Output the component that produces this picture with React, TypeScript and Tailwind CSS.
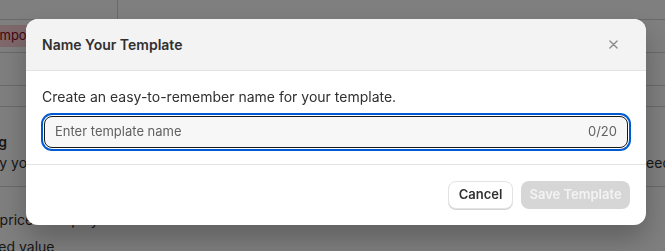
import React, { useState } from 'react';

const line = 'border-b border-[#d4d4d4]';

const PageBehind: React.FC = () => (
    <div className="h-[251px] w-[665px] overflow-hidden bg-white text-[14px] text-[#303030]">
        <div className={`flex h-[20px] ${line}`}>
            <div className="w-[118px] border-r border-[#d4d4d4]" />
        </div>
        <div className={`flex h-[33px] items-center ${line}`}>
            <span className="-ml-[12px] rounded-md bg-[#fed1d7] px-2 py-[1px] text-[13px] text-[#8e0b21]">Important</span>
        </div>
        <div className={`h-[33px] ${line}`} />
        <div className={`h-[21px] ${line}`} />
        <div className={`pt-[24px] pb-[13px] ${line}`}>
            <div className="flex w-[7px] justify-end whitespace-nowrap font-semibold">Pricing</div>
            <div className="flex justify-between whitespace-nowrap">
                <span className="-ml-[9px]">by your customers, so they never exceed</span>
                <span className="-mr-[6px]">exceed</span>
            </div>
        </div>
        <div className="pt-[22px] whitespace-nowrap">
            <div className="-ml-[31px]">Unit price is displayed</div>
            <div className="-ml-[50px] mt-[6px]">Estimated value</div>
        </div>
    </div>
);

export default function App() {
    const [name, setName] = useState('');

    return (
        <div className="relative font-['Inter',sans-serif]">
            <PageBehind />
            <div className="fixed inset-0 flex items-start bg-black/50 pl-[26px] pt-[19px]">
                <div className="w-[620px] overflow-hidden rounded-xl bg-white shadow-[0_14px_28px_rgba(0,0,0,0.25)]">
                    <div className="flex h-[52px] items-center justify-between border-b border-[#e3e3e3] bg-[#f3f3f3] px-4">
                        <h2 className="text-[14px] font-semibold text-[#303030]">Name Your Template</h2>
                        <button className="mr-[3px] flex h-7 w-7 items-center justify-center text-[#8a8a8a]">
                            <svg width="9" height="9" viewBox="0 0 10 10" fill="none" stroke="currentColor" strokeWidth="1.5" strokeLinecap="round">
                                <path d="M1 1l8 8M9 1l-8 8" />
                            </svg>
                        </button>
                    </div>
                    <div className="px-4 pt-4 pb-4">
                        <p className="text-[14px] leading-5 text-[#303030]">Create an easy-to-remember name for your template.</p>
                        <div className="mt-[9px] px-[2px]">
                            <div className="flex h-8 items-center rounded-lg border border-[#1a1a1a] bg-[#f7f7f7] px-[10px] ring-2 ring-[#005bd3] ring-offset-1">
                                <input
                                    value={name}
                                    onChange={(e) => setName(e.target.value.slice(0, 20))}
                                    placeholder="Enter template name"
                                    className="flex-1 bg-transparent text-[13px] text-[#303030] outline-none placeholder:text-[#616161]"
                                />
                                <span className="text-[13px] text-[#616161]">{name.length}/20</span>
                            </div>
                        </div>
                    </div>
                    <div className="flex justify-end gap-2 border-t border-[#e3e3e3] px-4 pt-4 pb-4">
                        <button className="h-7 w-[65px] rounded-lg border border-[#e3e3e3] bg-white text-[13px] font-semibold text-[#303030] shadow-[0_1px_0_#d4d4d4]">
                            Cancel
                        </button>
                        <button disabled className="h-7 w-[109px] rounded-lg bg-[#d6d6d6] text-[13px] font-semibold text-[#f3f3f3]">
                            Save Template
                        </button>
                    </div>
                </div>
            </div>
        </div>
    );
}
